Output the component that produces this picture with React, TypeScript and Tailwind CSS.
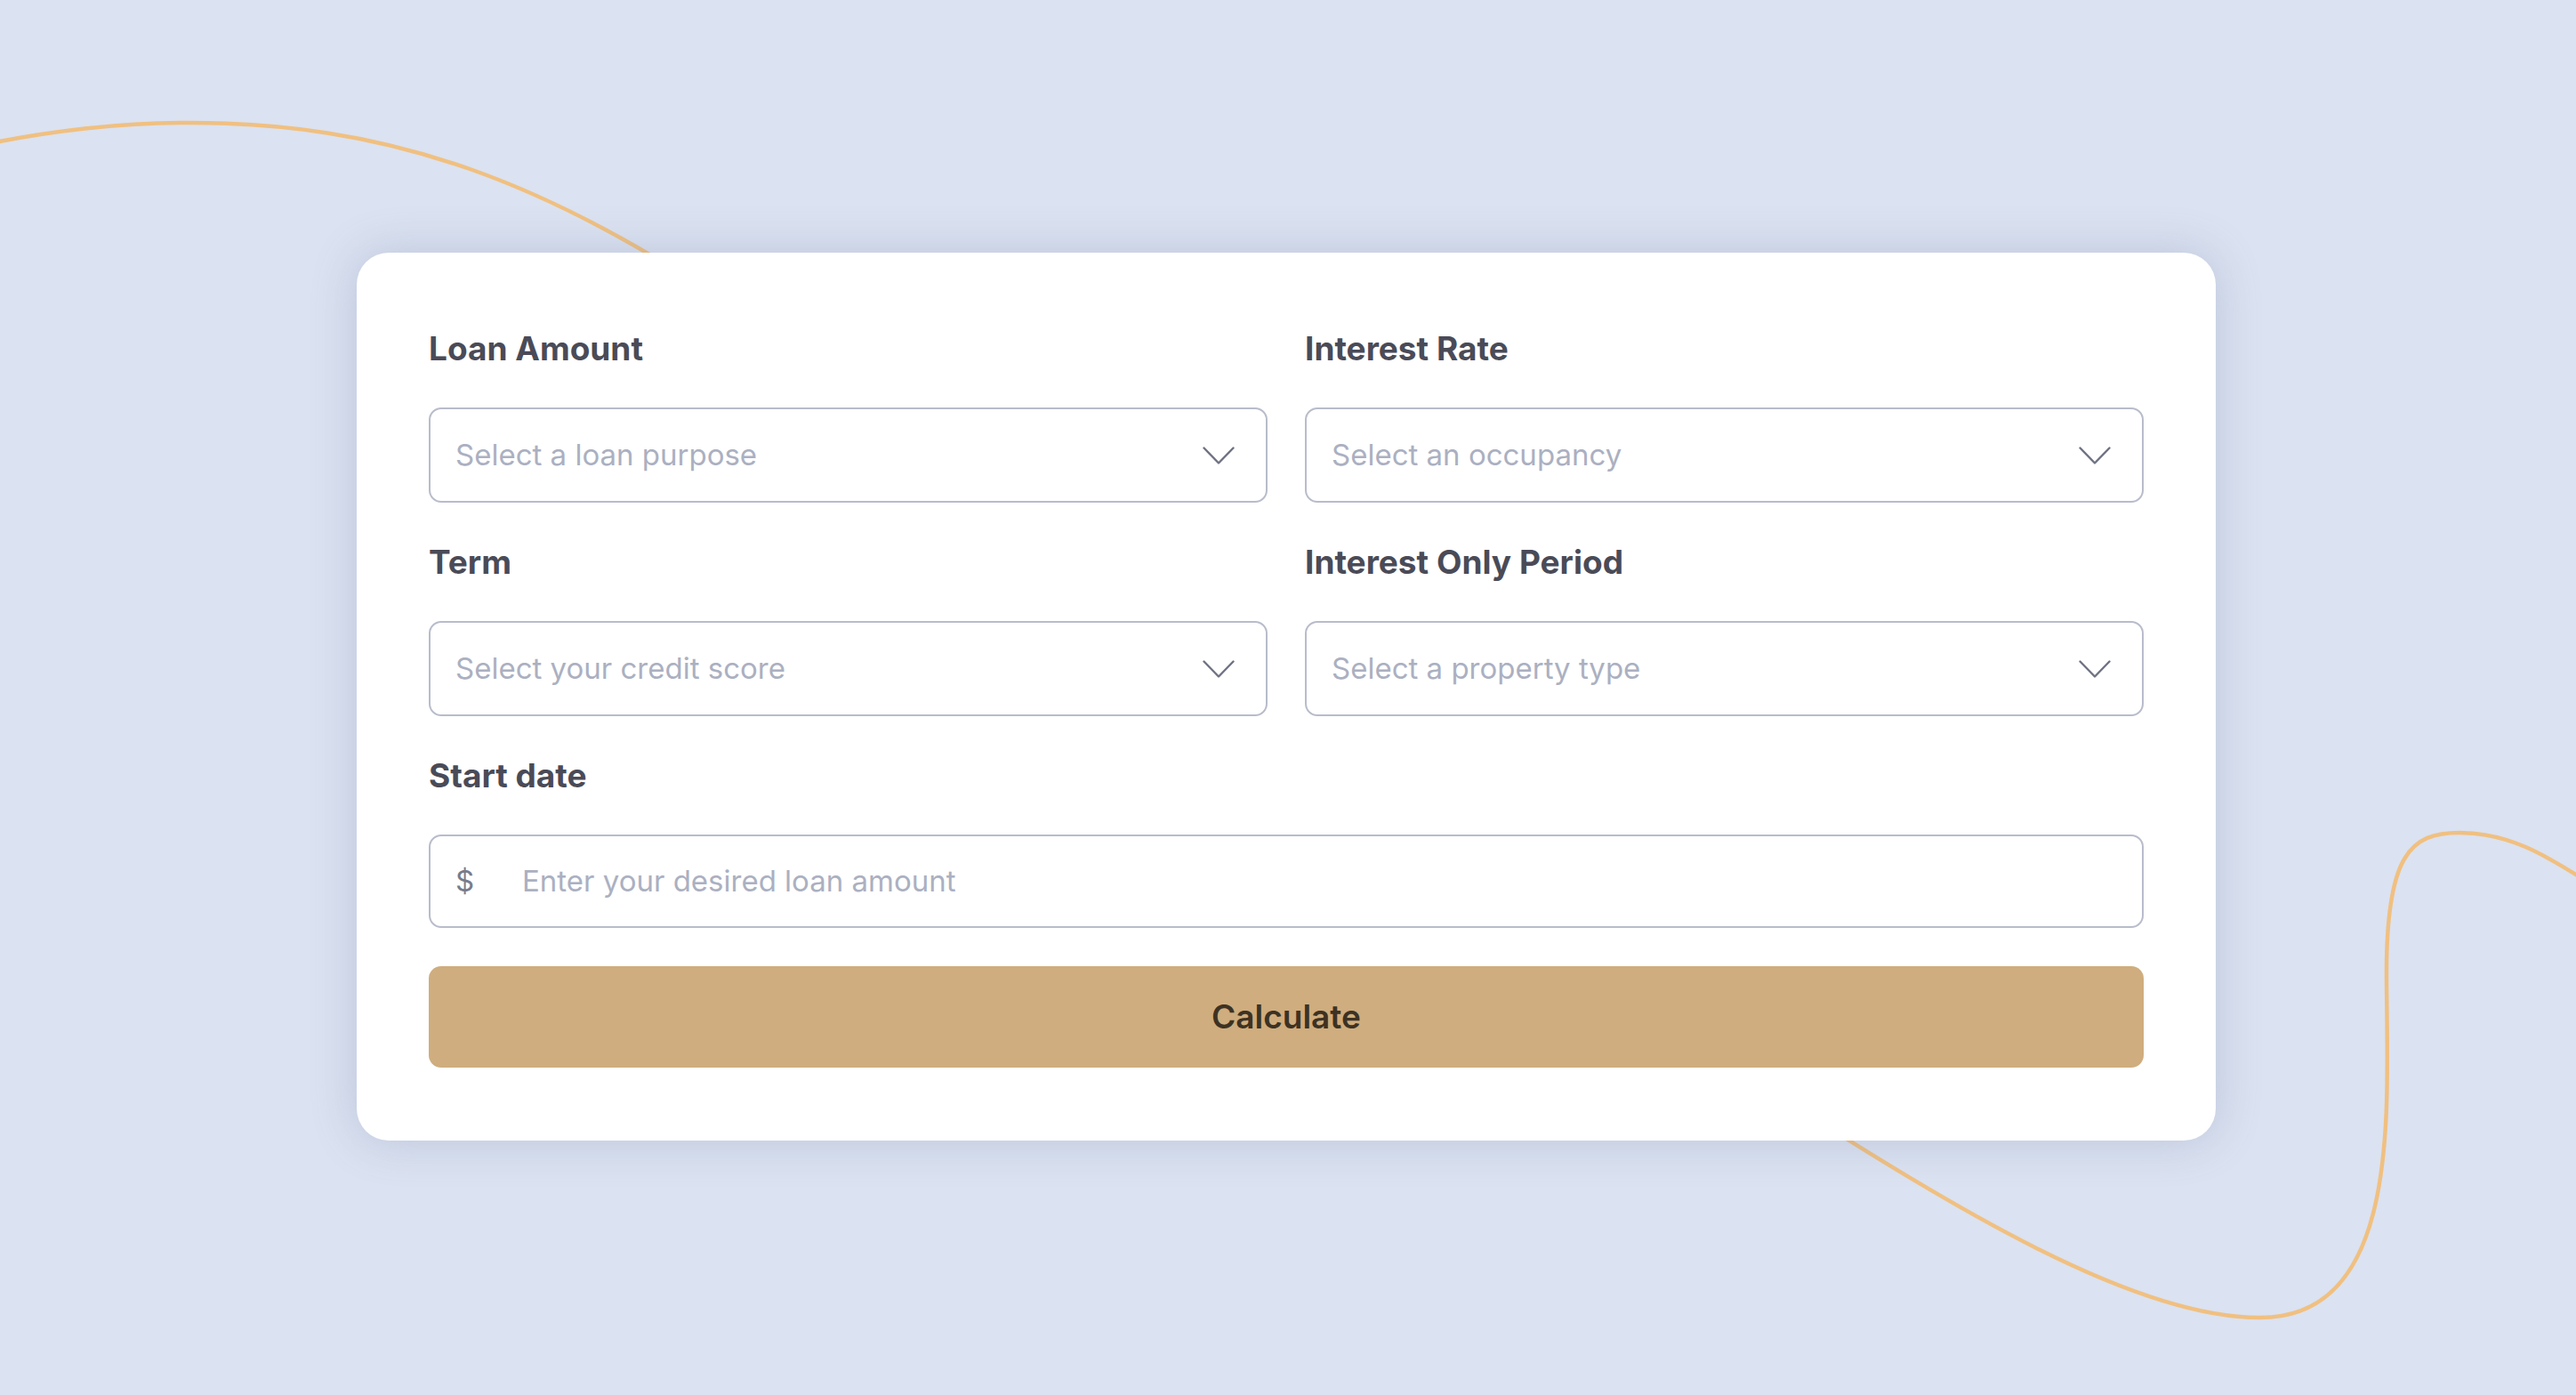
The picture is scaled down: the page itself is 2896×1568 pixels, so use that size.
import React from "react";

const FONT = { fontFamily: "Inter, 'Noto Sans', 'Liberation Sans', sans-serif" };

function Chevron() {
  return (
    <svg width="36" height="20" viewBox="0 0 36 20" fill="none" className="shrink-0">
      <path d="M1.5 1.5 L18 18.5 L34.5 1.5" stroke="#6e7282" strokeWidth="2.4" strokeLinecap="round" strokeLinejoin="round" />
    </svg>
  );
}

function SelectField({ label, placeholder }: { label: string; placeholder: string }) {
  return (
    <div className="flex flex-col">
      <div className="h-[48px] leading-[48px] text-[37px] font-bold text-[#4a4b57]">{label}</div>
      <div className="mt-[42px] h-[107px] rounded-[14px] border-2 border-[#b8bccb] bg-white flex items-center justify-between pl-[28px] pr-[35px]">
        <span className="text-[33px] text-[#abb0c1]">{placeholder}</span>
        <Chevron />
      </div>
    </div>
  );
}

export default function App() {
  return (
    <div className="relative w-full h-[1568px] overflow-hidden bg-[#dbe2f1]" style={FONT}>
      <svg className="absolute inset-0 pointer-events-none" width="2896" height="1568" viewBox="0 0 2896 1568" fill="none">
        <path
          d="M -20 163 C 50 148, 140 137, 212 138 C 420 138, 620 190, 900 400"
          stroke="#f0c081"
          strokeWidth="4.5"
          fill="none"
        />
        <path
          d="M 2000 1232 C 2200 1360, 2400 1481, 2540 1481 C 2700 1482, 2684 1250, 2683 1100 C 2682 960, 2710 936, 2765 936 C 2820 936, 2860 960, 2910 992"
          stroke="#f0c081"
          strokeWidth="4.5"
          fill="none"
        />
      </svg>
      <div className="relative z-10 flex justify-center pt-[284px]">
        <div className="w-[2090px] ml-[-4px] rounded-[36px] bg-white px-[81px] pt-[84px] pb-[82px] shadow-[0_0_50px_rgba(110,125,165,0.3)]">
          <div className="grid grid-cols-2 gap-x-[42px] gap-y-[43px]">
            <SelectField label="Loan Amount" placeholder="Select a loan purpose" />
            <SelectField label="Interest Rate" placeholder="Select an occupancy" />
            <SelectField label="Term" placeholder="Select your credit score" />
            <SelectField label="Interest Only Period" placeholder="Select a property type" />
          </div>
          <div className="mt-[43px] flex flex-col">
            <div className="h-[48px] leading-[48px] text-[37px] font-bold text-[#4a4b57]">Start date</div>
            <div className="mt-[42px] h-[105px] rounded-[14px] border-2 border-[#b8bccb] bg-white flex items-center pl-[28px]">
              <span className="text-[33px] text-[#777c8d] w-[46px]">$</span>
              <input
                className="ml-[29px] flex-1 bg-transparent outline-none text-[33px] text-[#4a4b57] placeholder:text-[#abb0c1]"
                placeholder="Enter your desired loan amount"
                style={FONT}
              />
            </div>
          </div>
          <button
            className="mt-[43px] w-full h-[114px] rounded-[14px] bg-[#cfad7e] text-[37px] font-semibold text-[#3d3223]"
            style={FONT}
          >
            Calculate
          </button>
        </div>
      </div>
    </div>
  );
}
